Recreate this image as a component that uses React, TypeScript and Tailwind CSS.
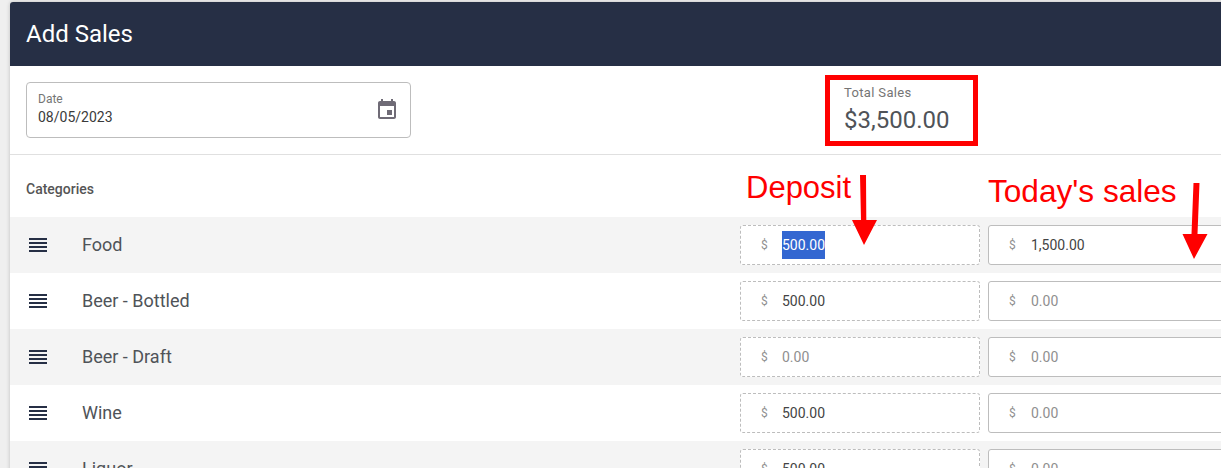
const ROWS = [
  { name: "Food", deposit: "500.00", sales: "1,500.00", selected: true },
  { name: "Beer - Bottled", deposit: "500.00", sales: "0.00" },
  { name: "Beer - Draft", deposit: "0.00", sales: "0.00" },
  { name: "Wine", deposit: "500.00", sales: "0.00" },
  { name: "Liquor", deposit: "500.00", sales: "0.00" },
]

function ReorderIcon() {
  return (
    <svg width="24" height="24" viewBox="0 0 24 24" fill="#262f45">
      <path d="M3 15h18v-2H3v2zm0 4h18v-2H3v2zm0-8h18V9H3v2zm0-6v2h18V5H3z" />
    </svg>
  )
}

function CalendarIcon() {
  return (
    <svg width="24" height="24" viewBox="0 0 24 24" fill="#6f6b76">
      <path d="M17 12h-5v5h5v-5zM16 1v2H8V1H6v2H5c-1.11 0-1.99.9-1.99 2L3 19c0 1.1.89 2 2 2h14c1.1 0 2-.9 2-2V5c0-1.1-.9-2-2-2h-1V1h-2zm3 18H5V8h14v11z" />
    </svg>
  )
}

function MoneyInput({ value, dashed, selected }: { value: string; dashed?: boolean; selected?: boolean }) {
  const empty = value === "0.00"
  return (
    <div
      className={`flex h-10 w-[240px] shrink-0 items-center rounded-[3px] border bg-white pl-[20px] text-sm border-[#bdbdbd] ${dashed ? "border-dashed" : ""}`}
    >
      <span className={`text-xs text-[#8f8f8f] ${dashed ? "w-[21px]" : "w-[22px]"}`}>$</span>
      {selected ? (
        <span className="flex h-7 items-center bg-[#3367d1] text-white">{value}</span>
      ) : (
        <span className={empty ? "text-[#8f8f8f]" : "text-[#444444]"}>{value}</span>
      )}
    </div>
  )
}

export default function App() {
  return (
    <div className="h-[468px] w-[1221px] overflow-hidden bg-[#efefef] pl-[10px] pt-[2px] font-['Roboto',sans-serif]">
      <div className="relative w-[1300px] rounded-t-[3px] bg-white shadow-[0_0_4px_rgba(0,0,0,0.2)]">
        <div className="flex h-16 items-center rounded-t-[3px] bg-[#262f45] px-4 text-2xl text-white">Add Sales</div>

        <div className="flex h-[89px] items-start border-b border-[#e0e0e0] px-4 pt-4">
          <div className="flex h-14 w-[385px] items-center justify-between rounded border border-[#bdbdbd] pl-[11px] pr-[11px]">
            <div className="-mt-[3px]">
              <p className="text-xs leading-[17px] text-[#757575]">Date</p>
              <p className="text-sm leading-[18px] text-[#3a3a3a]">08/05/2023</p>
            </div>
            <CalendarIcon />
          </div>
          <div className="-mt-[7px] ml-[414px] h-[71px] w-[153px] border-[5px] border-[#ff0000] pl-[14px] pt-[5px]">
            <p className="text-[13px] leading-4 tracking-[0.35px] text-[#757575]">Total Sales</p>
            <p className="mt-[5px] text-2xl leading-7 text-[#4f5358]">$3,500.00</p>
          </div>
        </div>

        <div className="flex h-[62px] items-center px-4 pt-[6px] text-sm font-medium text-[#555555]">Categories</div>

        {ROWS.map((row, i) => (
          <div key={row.name} className={`flex h-14 items-center px-4 ${i % 2 === 0 ? "bg-[#f4f4f4]" : "bg-white"}`}>
            <div className="w-14 shrink-0">
              <ReorderIcon />
            </div>
            <div className="w-[658px] shrink-0 text-lg text-[#4f5358]">{row.name}</div>
            <div className="flex gap-2">
              <MoneyInput value={row.deposit} dashed selected={row.selected} />
              <MoneyInput value={row.sales} />
            </div>
          </div>
        ))}

        {/* red notes drawn over the screenshot */}
        <span className="absolute left-[736px] top-[168px] font-['Liberation_Sans',sans-serif] text-[31px] leading-9 text-[#ff0000]">Deposit</span>
        <span className="absolute left-[978px] top-[171px] font-['Liberation_Sans',sans-serif] text-[31.6px] leading-9 text-[#ff0000]">Today's sales</span>
        <svg className="absolute left-[841px] top-[173px]" width="27" height="70" viewBox="0 0 27 70" fill="#ff0000">
          <path d="M9 0h6l.3 45H26L13 70 1 45h9z" />
        </svg>
        <svg className="absolute left-[1172px] top-[181px]" width="27" height="76" viewBox="0 0 27 76" fill="#ff0000">
          <path d="M11.5 0h6l-2 51h10L12 76 .5 51h9z" />
        </svg>
      </div>
    </div>
  )
}
